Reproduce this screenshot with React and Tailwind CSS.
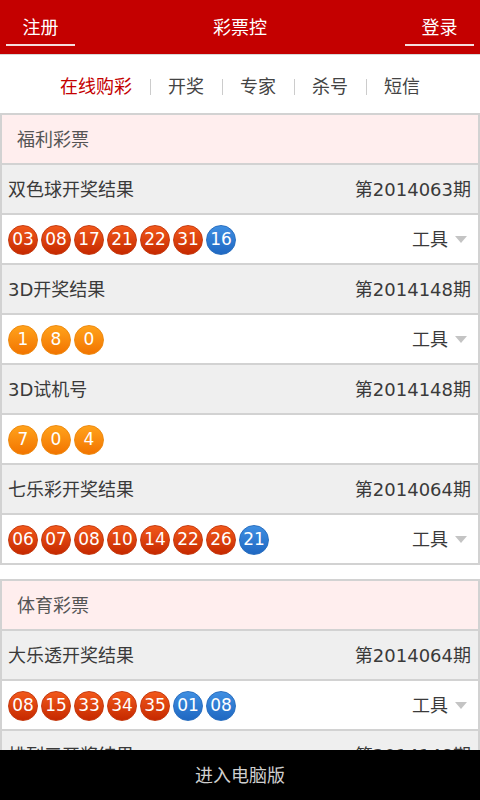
import React from "react";

const font = { fontFamily: '"DejaVu Sans", "Noto Sans CJK SC", sans-serif' };

const welfare = [
  { name: "双色球开奖结果", issue: "第2014063期", red: ["03", "08", "17", "21", "22", "31"], blue: ["16"], tool: true },
  { name: "3D开奖结果", issue: "第2014148期", orange: ["1", "8", "0"], tool: true },
  { name: "3D试机号", issue: "第2014148期", orange: ["7", "0", "4"], tool: false },
  { name: "七乐彩开奖结果", issue: "第2014064期", red: ["06", "07", "08", "10", "14", "22", "26"], blue: ["21"], tool: true },
];

const sports = [
  { name: "大乐透开奖结果", issue: "第2014064期", red: ["08", "15", "33", "34", "35"], blue: ["01", "08"], tool: true },
  { name: "排列三开奖结果", issue: "第2014148期", orange: ["3", "5", "1"], tool: true },
];

const ballColors = {
  red: "bg-linear-to-b from-[#f2581a] to-[#c62800] border-[#c53a10]",
  blue: "bg-linear-to-b from-[#3f8fe2] to-[#1f68c2] border-[#2a6fc0]",
  orange: "bg-linear-to-b from-[#ffa21a] to-[#f27400] border-[#ee8a10]",
};

const Ball = ({ n, color }) => (
  <span
    className={`w-[30px] h-[30px] rounded-full border flex items-center justify-center text-white text-[17px] leading-none ${ballColors[color]}`}
  >
    {n}
  </span>
);

const LotteryRows = ({ item }) => (
  <>
    <div className="h-[50px] border-t-2 border-[#d2d2d2] bg-[#efefef] flex items-center justify-between pl-[6px] pr-[7px] text-[18px] text-[#3a3a3a]">
      <span>{item.name}</span>
      <span>{item.issue}</span>
    </div>
    <div className="h-[50px] border-t-2 border-[#d2d2d2] bg-white flex items-center justify-between pl-[6px] pr-[11px]">
      <div className="flex gap-[3px] pt-[1px]">
        {(item.red || []).map((n, i) => (
          <Ball key={"r" + i} n={n} color="red" />
        ))}
        {(item.blue || []).map((n, i) => (
          <Ball key={"b" + i} n={n} color="blue" />
        ))}
        {(item.orange || []).map((n, i) => (
          <Ball key={"o" + i} n={n} color="orange" />
        ))}
      </div>
      {item.tool && (
        <div className="flex items-center gap-[7px] text-[18px] text-[#3a3a3a]">
          <span>工具</span>
          <svg width="12" height="7" viewBox="0 0 12 7">
            <path d="M0 0 L12 0 L6 7 Z" fill="#c4c4c4" />
          </svg>
        </div>
      )}
    </div>
  </>
);

const Section = ({ title, items }) => (
  <div className="border-2 border-[#d2d2d2]">
    <div className="h-[48px] bg-[#ffeeee] flex items-center pl-[15px] text-[18px] text-[#555]">
      {title}
    </div>
    {items.map((item) => (
      <LotteryRows key={item.name} item={item} />
    ))}
  </div>
);

const navItems = ["在线购彩", "开奖", "专家", "杀号", "短信"];

export default function App() {
  return (
    <div className="h-screen flex flex-col bg-white" style={font}>
      {/* header */}
      <div className="h-[55px] shrink-0 bg-[#c40000] border-b border-[#d8d8d8] flex items-start justify-between px-[6px] text-white text-[18px]">
        <div className="w-[69px] flex flex-col items-center pt-[19px]">
          <span className="leading-none">注册</span>
          <span className="mt-[7px] w-full h-[2px] bg-[#f4dede]" />
        </div>
        <span className="pt-[19px] leading-none">彩票控</span>
        <div className="w-[69px] flex flex-col items-center pt-[19px]">
          <span className="leading-none">登录</span>
          <span className="mt-[7px] w-full h-[2px] bg-[#f4dede]" />
        </div>
      </div>

      <div className="flex-1 overflow-hidden">
        {/* nav */}
        <div className="h-[58px] pt-[5px] flex items-center justify-center gap-[17.5px] text-[18px] text-[#444]">
          {navItems.map((n, i) => (
            <React.Fragment key={n}>
              {i > 0 && <span className="w-px h-[16px] bg-[#cccccc]" />}
              <span className={i === 0 ? "text-[#c40000]" : ""}>{n}</span>
            </React.Fragment>
          ))}
        </div>

        <Section title="福利彩票" items={welfare} />
        <div className="h-[14px]" />
        <Section title="体育彩票" items={sports} />
      </div>

      {/* footer */}
      <div className="h-[50px] shrink-0 bg-black flex items-center justify-center text-[18px] text-[#cfcfcf]">
        进入电脑版
      </div>
    </div>
  );
}
